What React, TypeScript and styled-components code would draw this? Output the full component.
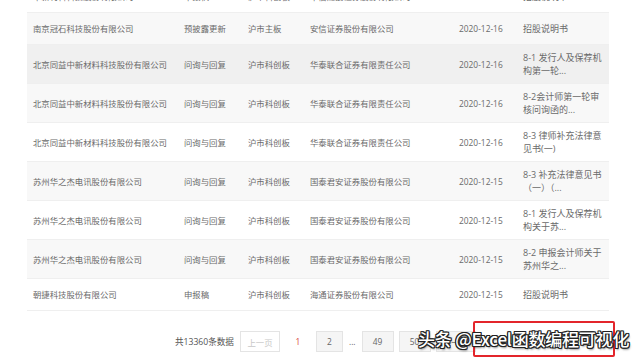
import styled, { createGlobalStyle } from 'styled-components';

const GlobalStyle = createGlobalStyle`
    html, body {
        margin: 0;
        padding: 0;
        background: #fff;
        overflow: hidden;
    }
    body {
        font-family: 'Open Sans', 'Noto Sans CJK SC', sans-serif;
        width: 640px;
        height: 360px;
    }
`;

interface Row {
    company: string;
    kind: string;
    market: string;
    sponsor: string;
    date: string;
    doc: string[];
}

const rows: Row[] = [
    { company: '华新材料科技股份有限公司', kind: '申报稿', market: '沪市科创板', sponsor: '中信建投证券股份有限公司', date: '2020-12-16', doc: ['招股说明书'] },
    { company: '南京冠石科技股份有限公司', kind: '预披露更新', market: '沪市主板', sponsor: '安信证券股份有限公司', date: '2020-12-16', doc: ['招股说明书'] },
    { company: '北京同益中新材料科技股份有限公司', kind: '问询与回复', market: '沪市科创板', sponsor: '华泰联合证券有限责任公司', date: '2020-12-16', doc: ['8-1 发行人及保荐机', '构第一轮...'] },
    { company: '北京同益中新材料科技股份有限公司', kind: '问询与回复', market: '沪市科创板', sponsor: '华泰联合证券有限责任公司', date: '2020-12-16', doc: ['8-2会计师第一轮审', '核问询函的...'] },
    { company: '北京同益中新材料科技股份有限公司', kind: '问询与回复', market: '沪市科创板', sponsor: '华泰联合证券有限责任公司', date: '2020-12-16', doc: ['8-3 律师补充法律意', '见书(一)'] },
    { company: '苏州华之杰电讯股份有限公司', kind: '问询与回复', market: '沪市科创板', sponsor: '国泰君安证券股份有限公司', date: '2020-12-15', doc: ['8-3 补充法律意见书', '（一）（...'] },
    { company: '苏州华之杰电讯股份有限公司', kind: '问询与回复', market: '沪市科创板', sponsor: '国泰君安证券股份有限公司', date: '2020-12-15', doc: ['8-1 发行人及保荐机', '构关于苏...'] },
    { company: '苏州华之杰电讯股份有限公司', kind: '问询与回复', market: '沪市科创板', sponsor: '国泰君安证券股份有限公司', date: '2020-12-15', doc: ['8-2 申报会计师关于', '苏州华之...'] },
    { company: '朝捷科技股份有限公司', kind: '申报稿', market: '沪市科创板', sponsor: '海通证券股份有限公司', date: '2020-12-15', doc: ['招股说明书'] },
];

const HOVER_ROW = 2;

const Page = styled.div`
    position: relative;
    width: 640px;
    height: 360px;
    overflow: hidden;
    padding: 0 31px 0 27px;
    box-sizing: border-box;
`;

const Table = styled.div`
    margin-top: -19px;
    display: flex;
    flex-direction: column;
`;

const TableRow = styled.div<{ $tone: 'plain' | 'stripe' | 'hover' }>`
    display: grid;
    grid-template-columns: 151px 64px 62px 149px 64px 92px;
    min-height: 32px;
    box-sizing: border-box;
    border-bottom: 1px solid #efefef;
    background: ${(p) => (p.$tone === 'hover' ? '#f0f0f0' : p.$tone === 'stripe' ? '#f8f8f8' : '#fff')};
`;

const Cell = styled.div<{ $tight?: boolean }>`
    display: flex;
    flex-direction: column;
    justify-content: center;
    padding: 6px ${(p) => (p.$tight ? '8px' : '4px')} 6px 6px;
    font-size: 8.4px;
    line-height: 13px;
    color: #6a6a6a;
    white-space: nowrap;
    overflow: hidden;
`;

const DocLine = styled.span`
    font-size: 9px;
    display: block;
`;

const Pager = styled.div`
    display: flex;
    align-items: center;
    gap: 5px;
    margin-top: 20px;
    padding-left: 148px;
`;

const Total = styled.span`
    font-size: 8.6px;
    color: #555;
    margin-right: 1px;
`;

const PageButton = styled.span<{ $variant?: 'normal' | 'disabled' | 'active' | 'gap'; $w?: number }>`
    display: inline-flex;
    align-items: center;
    justify-content: center;
    box-sizing: border-box;
    height: 21px;
    min-width: ${(p) => p.$w ?? 27}px;
    font-size: 8.4px;
    color: ${(p) =>
        p.$variant === 'disabled' ? '#c8c8c8' : p.$variant === 'active' ? '#d9423f' : '#666'};
    border: 1px solid
        ${(p) => (p.$variant === 'active' || p.$variant === 'gap' ? 'transparent' : '#e4e4e4')};
    background: ${(p) =>
        p.$variant === 'normal' || p.$variant === undefined ? '#f5f5f5' : 'transparent'};
`;

const Watermark = styled.div`
    position: absolute;
    left: 418px;
    top: 327px;
    font-family: 'Noto Sans CJK SC', sans-serif;
    font-size: 17px;
    font-weight: 500;
    line-height: 24px;
    color: #fff;
    white-space: nowrap;
    letter-spacing: -0.2px;
    text-shadow:
        1px 0 0 #222, -1px 0 0 #222, 0 1px 0 #222, 0 -1px 0 #222,
        1px 1px 0 #222, -1px -1px 0 #222, 1px -1px 0 #222, -1px 1px 0 #222,
        1px 2px 2px rgba(0, 0, 0, 0.5);
`;

const Highlight = styled.div`
    position: absolute;
    left: 473px;
    top: 321px;
    width: 142px;
    height: 36px;
    box-sizing: border-box;
    border: 2px solid #e3252b;
    border-radius: 2px;
`;

const App = () => {
    return (
        <Page>
            <GlobalStyle />
            <Table>
                {rows.map((r, i) => (
                    <TableRow key={i} $tone={i === HOVER_ROW ? 'hover' : i % 2 === 1 ? 'stripe' : 'plain'}>
                        <Cell>{r.company}</Cell>
                        <Cell>{r.kind}</Cell>
                        <Cell>{r.market}</Cell>
                        <Cell>{r.sponsor}</Cell>
                        <Cell>{r.date}</Cell>
                        <Cell $tight>
                            {r.doc.map((line, j) => (
                                <DocLine key={j}>{line}</DocLine>
                            ))}
                        </Cell>
                    </TableRow>
                ))}
            </Table>
            <Pager>
                <Total>共13360条数据</Total>
                <PageButton $variant="disabled" $w={40}>上一页</PageButton>
                <PageButton $variant="active" $w={26}>1</PageButton>
                <PageButton>2</PageButton>
                <PageButton $variant="gap" $w={5}>...</PageButton>
                <PageButton $w={32}>49</PageButton>
                <PageButton $w={32}>50</PageButton>
                <PageButton $w={40}>下一页</PageButton>
            </Pager>
            <Highlight />
            <Watermark>头条 @Excel函数编程可视化</Watermark>
        </Page>
    );
};

export default App;
